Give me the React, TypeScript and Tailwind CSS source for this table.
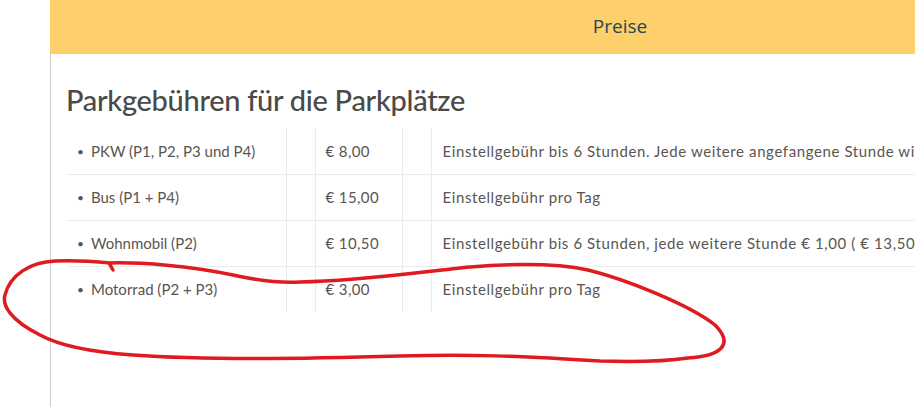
import React from "react";

const rows = [
  {
    name: "PKW (P1, P2, P3 und P4)",
    price: "€ 8,00",
    desc: "Einstellgebühr bis 6 Stunden. Jede weitere angefangene Stunde wird mit € 1,00 berechnet.",
  },
  { name: "Bus (P1 + P4)", price: "€ 15,00", desc: "Einstellgebühr pro Tag" },
  {
    name: "Wohnmobil (P2)",
    price: "€ 10,50",
    desc: "Einstellgebühr bis 6 Stunden, jede weitere Stunde € 1,00 ( € 13,50 pro Tag )",
  },
  { name: "Motorrad (P2 + P3)", price: "€ 3,00", desc: "Einstellgebühr pro Tag" },
];

export default function App() {
  return (
    <div className="relative w-[915px] h-[407px] overflow-hidden bg-white">
      <div className="ml-[50px] w-[1140px] h-full flex flex-col">
        <div className="h-[54px] shrink-0 bg-[#fed06b] border-b border-[#cfcfcf] flex items-center justify-center">
          <span
            className="text-[19px] text-[#24475a]"
            style={{ fontFamily: "'Open Sans', sans-serif" }}
          >
            Preise
          </span>
        </div>
        <div className="flex-1 border-l border-[#cccccc] pl-[15px]">
          <h2
            className="mt-[26px] text-[29px] leading-[40px] font-medium text-[#4a4a4a] tracking-[-0.3px]"
            style={{ fontFamily: "Lato, sans-serif" }}
          >
            Parkgebühren für die Parkplätze
          </h2>
          <table
            className="mt-[8px] border-collapse text-[15px] text-[#5a5550]"
            style={{ fontFamily: "Lato, sans-serif" }}
          >
            <tbody>
              {rows.map((r, i) => (
                <tr key={i} className={i > 0 ? "border-t border-[#ebebeb]" : ""}>
                  <td className="w-[220px] h-[46px] pl-[11px] whitespace-nowrap">
                    <span className="mr-[7px] text-[12px] align-[1px]">•</span>
                    {r.name}
                  </td>
                  <td className="w-[29px] border-l border-[#ebebeb]"></td>
                  <td className="w-[87px] pl-[10px] border-l border-[#ebebeb] whitespace-nowrap tracking-[0.4px]">{r.price}</td>
                  <td className="w-[29px] border-l border-[#ebebeb]"></td>
                  <td className="pl-[11px] border-l border-[#ebebeb] whitespace-nowrap tracking-[0.6px]">{r.desc}</td>
                </tr>
              ))}
            </tbody>
          </table>
        </div>
      </div>
      <svg
        className="absolute left-0 top-0 pointer-events-none"
        width="915"
        height="407"
        viewBox="0 0 915 407"
      >
        <path
          d="M 113 270 L 109 263 C 140 262, 190 266, 233 275 C 260 281, 283 283, 300 282 C 360 281, 420 272, 470 267 C 520 263, 560 264, 588 270 C 625 279, 690 305, 715 325 C 735 345, 720 356, 688 358 C 660 362, 630 362, 600 361 C 520 356, 470 354, 400 356 C 300 359, 200 360, 133 355 C 90 352, 60 346, 40 335 C 10 320, 2 305, 5 295 C 10 275, 30 262, 55 261 C 80 260, 100 262, 110 263"
          fill="none"
          stroke="#e01b1f"
          strokeWidth="3.5"
          strokeLinecap="round"
          strokeLinejoin="round"
        />
      </svg>
    </div>
  );
}
